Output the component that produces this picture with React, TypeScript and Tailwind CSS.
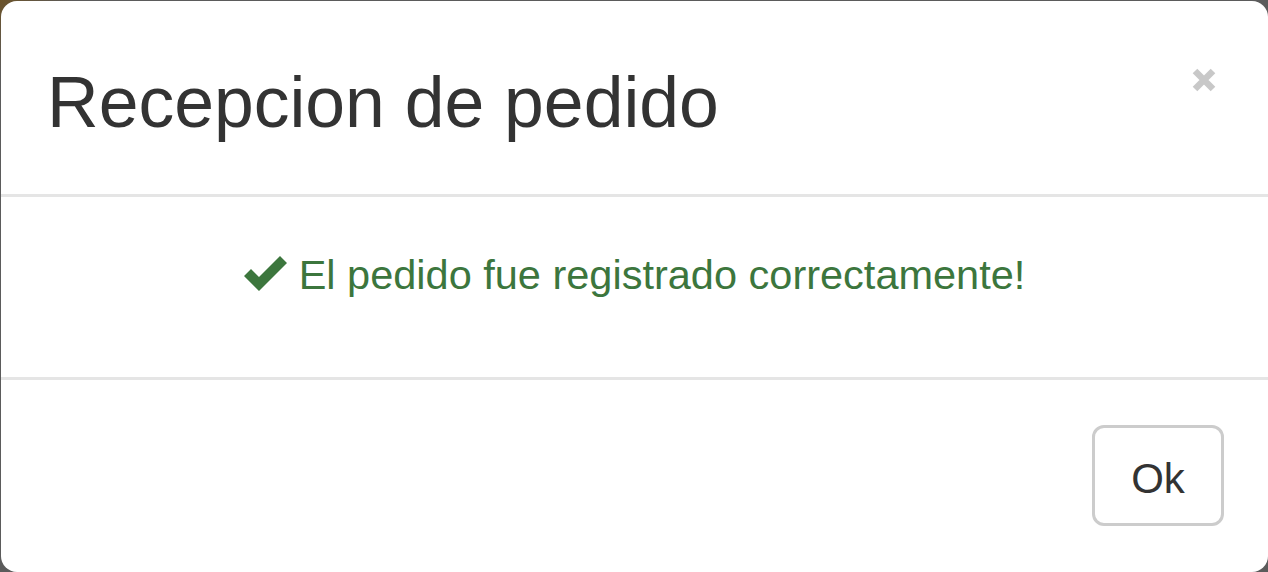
import React from "react";

export default function App() {
  return (
    <div
      className="w-[1268px] h-[572px] pt-[1px] pl-[1px] bg-[linear-gradient(135deg,#6b5228_0%,#5b5b5b_4%,#5b5b5b_100%)] overflow-hidden"
      style={{ fontFamily: '"Liberation Sans", Arial, sans-serif' }}
    >
      <div className="relative flex flex-col w-[1267px] h-[571px] bg-white rounded-[16px] overflow-hidden">
        {/* header */}
        <div className="relative h-[196px] border-b-[3px] border-[#e5e5e5] pl-[46px] pt-[62px]">
          <h3 className="text-[71.5px] leading-[79px] text-[#333333] font-normal">
            Recepcion de pedido
          </h3>
          <button className="absolute right-[52px] top-[67px] w-[24px] h-[24px]" aria-label="Close">
            <svg viewBox="0 0 24 24" width="24" height="24">
              <path d="M3 3 L21 21 M21 3 L3 21" stroke="#c8c8c8" strokeWidth="6.5" strokeLinecap="butt" />
            </svg>
          </button>
        </div>
        {/* body */}
        <div className="h-[183px] border-b-[3px] border-[#e5e5e5] pt-[48px] flex justify-center">
          <div className="flex items-center h-[60px] text-[41.5px] leading-[60px] text-[#3c763d]">
            <svg viewBox="0 0 43 35" width="43" height="35" className="mr-[12px] mb-[3px]">
              <polygon points="0,20 7,13 15,21 36,0 43,7 15,35" fill="#3c763d" />
            </svg>
            <span>El pedido fue registrado correctamente!</span>
          </div>
        </div>
        {/* footer */}
        <div className="flex-1 flex justify-end pt-[45px] pr-[44px]">
          <button className="w-[132px] h-[101px] border-[3px] border-[#cccccc] rounded-[12px] bg-white text-[42px] text-[#333333] leading-[60px] pt-[6px]">
            Ok
          </button>
        </div>
      </div>
    </div>
  );
}
